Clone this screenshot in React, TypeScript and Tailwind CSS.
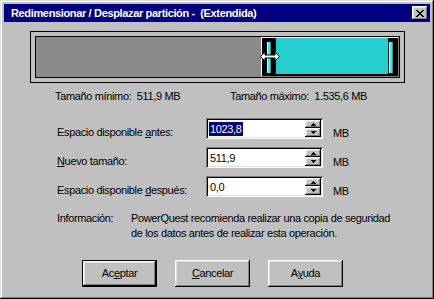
import React from 'react';

const raised =
  'shadow-[inset_-1px_-1px_#000,inset_1px_1px_#fff,inset_-2px_-2px_#808080,inset_2px_2px_#dfdfdf]';
const sunken =
  'shadow-[inset_1px_1px_#808080,inset_-1px_-1px_#fff,inset_2px_2px_#000,inset_-2px_-2px_#dfdfdf]';

function SpinField({ value, selected }: { value: string; selected?: boolean }) {
  return (
    <div className={`w-[117px] h-[21px] bg-white flex items-center pl-[2px] pr-[2px] ${sunken}`}>
      <div className="flex-1 flex items-center h-full pl-[1px]">
        {selected ? (
          <span className="bg-[#000080] text-white leading-[14px] px-[1px]">{value}</span>
        ) : (
          <span className="leading-[14px] px-[1px]">{value}</span>
        )}
      </div>
      <div className="flex flex-col w-[16px] h-[17px]">
        <div className={`h-[8px] bg-[#c0c0c0] flex items-center justify-center ${raised}`}>
          <svg width="5" height="3" viewBox="0 0 5 3">
            <path d="M2 0h1v1h1v1h1v1H0V2h1V1h1z" fill="#000" />
          </svg>
        </div>
        <div className={`h-[9px] bg-[#c0c0c0] flex items-center justify-center ${raised}`}>
          <svg width="5" height="3" viewBox="0 0 5 3">
            <path d="M0 0h5v1H4v1H3v1H2V2H1V1H0z" fill="#000" />
          </svg>
        </div>
      </div>
    </div>
  );
}

function Row({ label, value, selected }: { label: React.ReactNode; value: string; selected?: boolean }) {
  return (
    <div className="flex items-start ml-[53px]">
      <div className="w-[149px] pt-[8px] leading-[13px]">{label}</div>
      <SpinField value={value} selected={selected} />
      <div className="ml-[10px] pt-[9px] leading-[13px]">MB</div>
    </div>
  );
}

function HandleBar() {
  return <div className="w-[4px] h-[31px] bg-[#00ffff] border-l border-white border-r border-r-[#808080]" />;
}

function Button({ children, isDefault }: { children: React.ReactNode; isDefault?: boolean }) {
  return (
    <div className={`w-[75px] h-[27px] ${isDefault ? 'border border-black' : ''}`}>
      <div className={`w-full h-full bg-[#c0c0c0] flex items-center justify-center ${raised}`}>{children}</div>
    </div>
  );
}

export default function App() {
  return (
    <div
      className={`w-[434px] h-[299px] bg-[#c0c0c0] p-[4px] flex flex-col font-['Liberation_Sans',Arial,sans-serif] text-[11px] tracking-[-0.35px] text-black shadow-[inset_-1px_-1px_#000,inset_1px_1px_#dfdfdf,inset_-2px_-2px_#808080,inset_2px_2px_#fff]`}
    >
      {/* Title bar */}
      <div className="h-[18px] bg-[#000080] flex items-center justify-between pl-[7px] pr-[2px]">
        <span className="text-white font-bold text-[11px] whitespace-pre">
          Redimensionar / Desplazar partición -  (Extendida)
        </span>
        <div className={`w-[16px] h-[14px] bg-[#c0c0c0] flex items-center justify-center ${raised}`}>
          <svg width="8" height="7" viewBox="0 0 8 7">
            <path d="M0 0h2v1h1v1h2V1h1V0h2v1H7v1H6v1H5v1h1v1h1v1h1v1H6V6H5V5H3v1H2v1H0V6h1V5h1V4h1V3H2V2H1V1H0z" fill="#000" />
          </svg>
        </div>
      </div>

      {/* Partition map */}
      <div className="ml-[26px] mt-[9px] w-[375px] h-[52px] border border-black p-[4px]">
        <div className="h-full border border-black flex">
          <div className="flex-1 bg-[#8a8a8a]" />
          <div className="relative w-[138px] h-full border-t border-l border-white border-r border-b border-r-[#808080] border-b-[#808080] bg-black flex">
            <div className="w-[14px] pl-[5px] flex items-center">
              <HandleBar />
            </div>
            <div className="flex-1 mb-[2px] bg-[#26cfcf] bg-[radial-gradient(circle,#6e9e9e_0.6px,transparent_0.7px)] bg-[length:2px_2px]" />
            <div className="w-[10px] pl-[1px] flex items-center">
              <HandleBar />
            </div>
            <svg className="absolute left-[-2px] top-[13px]" width="21" height="11" viewBox="0 0 21 11">
              <path
                d="M0.5 5.5 L5 1 L5 4 L15 4 L15 1 L19.5 5.5 L15 10 L15 7 L5 7 L5 10 Z"
                fill="#fff"
                stroke="#000"
                strokeWidth="1"
              />
            </svg>
          </div>
        </div>
      </div>

      {/* Min / max */}
      <div className="flex mt-[7px] ml-[51px] leading-[13px]">
        <div className="w-[175px] whitespace-pre">Tamaño mínimo:  511,9 MB</div>
        <div className="whitespace-pre">Tamaño máximo:  1.535,6 MB</div>
      </div>

      {/* Fields */}
      <div className="flex flex-col gap-[7px] mt-[15px]">
        <Row
          label={
            <>
              Espacio disponible <span className="underline">a</span>ntes:
            </>
          }
          value="1023,8"
          selected
        />
        <Row
          label={
            <>
              <span className="underline">N</span>uevo tamaño:
            </>
          }
          value="511,9"
        />
        <Row
          label={
            <>
              Espacio disponible <span className="underline">d</span>espués:
            </>
          }
          value="0,0"
        />
      </div>

      {/* Info */}
      <div className="flex ml-[53px] mt-[13px] leading-[15px]">
        <div className="w-[74px]">Información:</div>
        <div>
          PowerQuest recomienda realizar una copia de seguridad
          <br />
          de los datos antes de realizar esta operación.
        </div>
      </div>

      {/* Buttons */}
      <div className="flex gap-[18px] ml-[78px] mt-[19px]">
        <Button isDefault>
          <span>
            Ac<span className="underline">e</span>ptar
          </span>
        </Button>
        <Button>
          <span>
            <span className="underline">C</span>ancelar
          </span>
        </Button>
        <Button>
          <span>
            A<span className="underline">y</span>uda
          </span>
        </Button>
      </div>
    </div>
  );
}
